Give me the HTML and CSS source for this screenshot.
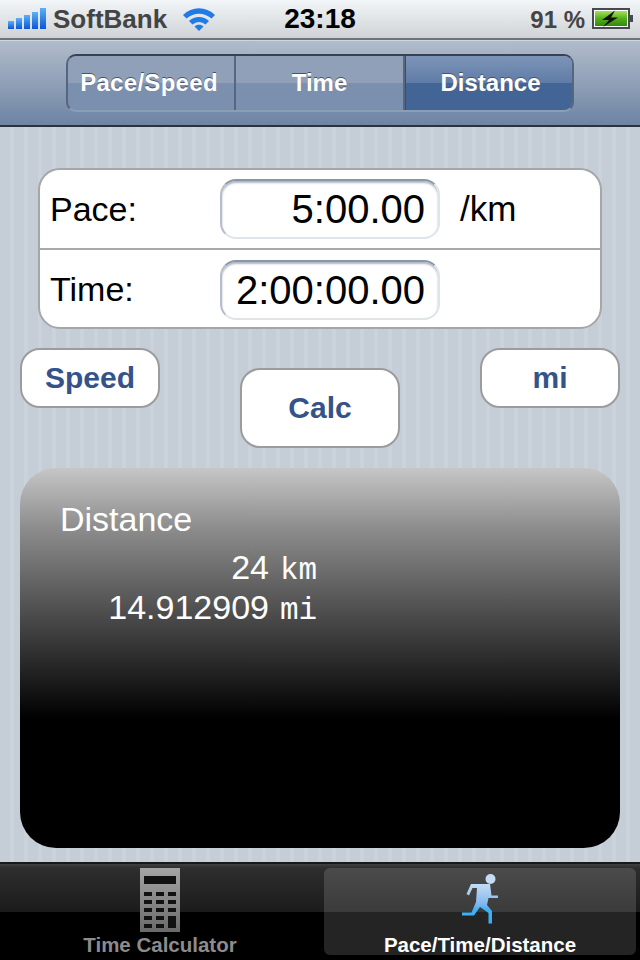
FILE: index.html
```html
<!DOCTYPE html>
<html lang="en">
<head>
    <meta charset="UTF-8">
    <title>Pace/Time/Distance</title>
    <link rel="stylesheet" href="styles.css">
</head>
<body>
    <div class="status-bar">
        <div class="status-left">
            <svg class="signal" width="40" height="22" viewBox="0 0 40 22">
                <defs>
                    <linearGradient id="sig" x1="0" y1="0" x2="0" y2="1">
                        <stop offset="0" stop-color="#5db0f5"/>
                        <stop offset="1" stop-color="#0a56d8"/>
                    </linearGradient>
                </defs>
                <rect x="0" y="13" width="6" height="8" fill="url(#sig)"/>
                <rect x="8" y="10" width="6" height="11" fill="url(#sig)"/>
                <rect x="16" y="7" width="6" height="14" fill="url(#sig)"/>
                <rect x="24" y="4" width="6" height="17" fill="url(#sig)"/>
                <rect x="32" y="0" width="6" height="21" fill="url(#sig)"/>
            </svg>
            <span class="carrier">SoftBank</span>
            <svg class="wifi" width="34" height="26" viewBox="0 0 34 26">
                <path d="M1 9 C10 0 24 0 33 9 L29.5 12.5 C22 6 12 6 4.500 12.500 Z" fill="#1f7be8"/>
                <path d="M7 15 C12.500 9.500 21.500 9.500 27 15 L23.500 18.500 C19.500 15 14.500 15 10.500 18.500 Z" fill="#1f7be8"/>
                <path d="M12.500 20.500 C15 18 19 18 21.500 20.500 L17 25 Z" fill="#1f7be8"/>
            </svg>
        </div>
        <div class="clock">23:18</div>
        <div class="status-right">
            <span class="battery-text">91 %</span>
            <svg class="battery" width="42" height="22" viewBox="0 0 42 22">
                <defs>
                    <linearGradient id="bat" x1="0" y1="0" x2="0" y2="1">
                        <stop offset="0" stop-color="#a6e05a"/>
                        <stop offset="0.5" stop-color="#54b01a"/>
                        <stop offset="1" stop-color="#2f8a0c"/>
                    </linearGradient>
                </defs>
                <rect x="1" y="1" width="36" height="19" fill="#fff" stroke="#444a50" stroke-width="2"/>
                <rect x="3" y="3" width="32" height="15" fill="url(#bat)"/>
                <rect x="37" y="7" width="4" height="7" fill="#444a50"/>
                <path d="M23 2.500 L10 12 L17 12 L11 19 L26 9.500 L19 9.500 Z" fill="#111"/>
            </svg>
        </div>
    </div>

    <header class="nav-bar">
        <div class="segments">
            <div class="segment">Pace/Speed</div>
            <div class="segment">Time</div>
            <div class="segment active">Distance</div>
        </div>
    </header>

    <main class="main-content">
        <div class="form-card">
            <div class="form-row">
                <label class="form-label">Pace:</label>
                <div class="text-field">5:00.00</div>
                <span class="unit">/km</span>
            </div>
            <div class="form-row">
                <label class="form-label">Time:</label>
                <div class="text-field">2:00:00.00</div>
            </div>
        </div>

        <div class="button-row">
            <button class="round-button small">Speed</button>
            <button class="round-button calc">Calc</button>
            <button class="round-button small">mi</button>
        </div>

        <section class="result-panel">
            <h2 class="result-title">Distance</h2>
            <div class="result-line"><span class="result-value">24</span><span class="result-unit">km</span></div>
            <div class="result-line"><span class="result-value">14.912909</span><span class="result-unit">mi</span></div>
        </section>
    </main>

    <nav class="tab-bar">
        <div class="tab">
            <svg class="tab-icon" width="40" height="64" viewBox="0 0 40 64">
                <defs>
                    <linearGradient id="calc" x1="0" y1="0" x2="0" y2="1">
                        <stop offset="0" stop-color="#a4a4a4"/>
                        <stop offset="1" stop-color="#6a6a6a"/>
                    </linearGradient>
                </defs>
                <rect width="40" height="64" fill="url(#calc)"/>
                <g fill="#111">
                    <rect x="4" y="8" width="32" height="8"/>
                    <rect x="4" y="24" width="8" height="4"/><rect x="16" y="24" width="8" height="4"/><rect x="28" y="24" width="8" height="4"/>
                    <rect x="4" y="32" width="8" height="4"/><rect x="16" y="32" width="8" height="4"/><rect x="28" y="32" width="8" height="4"/>
                    <rect x="4" y="40" width="8" height="4"/><rect x="16" y="40" width="8" height="4"/><rect x="28" y="40" width="8" height="4"/>
                    <rect x="4" y="48" width="8" height="4"/><rect x="16" y="48" width="8" height="4"/>
                    <rect x="4" y="56" width="8" height="4"/><rect x="16" y="56" width="8" height="4"/>
                    <rect x="28" y="48" width="8" height="12"/>
                </g>
            </svg>
            <span class="tab-label">Time Calculator</span>
        </div>
        <div class="tab active">
            <svg class="tab-icon" width="40" height="52" viewBox="0 0 40 52">
                <defs>
                    <linearGradient id="run" x1="0" y1="0" x2="0" y2="1">
                        <stop offset="0" stop-color="#c4dcf4"/>
                        <stop offset="0.5" stop-color="#84b8ec"/>
                        <stop offset="0.65" stop-color="#3fb0f8"/>
                        <stop offset="1" stop-color="#35aefc"/>
                    </linearGradient>
                </defs>
                <circle cx="30.500" cy="5" r="5" fill="#c4dcf4"/>
                <path d="M6.500 20 L11 10 L30 10 L31.500 21.500 L38 21.500 L38 24 L28.500 24 L27 31 L32 37 L32 49.500 L28.500 49.500 L28.500 39 L20 33 L14 41.500 L2 41.500 L2 38.500 L11.500 38.500 L16 28 L17 14 L12.500 14 L9 21.500 Z" fill="url(#run)"/>
            </svg>
            <span class="tab-label">Pace/Time/Distance</span>
        </div>
    </nav>
</body>
</html>
```

FILE: styles.css
```css
* {
    margin: 0;
    padding: 0;
    box-sizing: border-box;
}

body {
    width: 640px;
    height: 960px;
    overflow: hidden;
    font-family: 'Liberation Sans', sans-serif;
    display: flex;
    flex-direction: column;
    background: #c5cdd7;
}

.status-bar {
    flex: 0 0 40px;
    display: flex;
    justify-content: space-between;
    align-items: center;
    padding: 0 6px 0 8px;
    position: relative;
    background: linear-gradient(#f2f6f8, #cfd3d5);
    border-bottom: 2px solid #6f7377;
    color: #444;
    font-size: 26px;
    font-weight: 700;
}

.status-left,
.status-right {
    display: flex;
    align-items: center;
}

.status-left {
    gap: 5px;
}

.status-right {
    gap: 7px;
}

.carrier,
.battery-text {
    padding-top: 1px;
}

.battery-text {
    font-size: 24px;
}

.wifi {
    margin-left: 10px;
}

.clock {
    position: absolute;
    left: 0;
    right: 0;
    top: 3px;
    text-align: center;
    color: #000;
    font-size: 28px;
}

.nav-bar {
    flex: 0 0 87px;
    display: flex;
    justify-content: center;
    align-items: center;
    background: linear-gradient(#b1bccb, #6e84a3);
    border-top: 1px solid #ced5dd;
    border-bottom: 2px solid #2d3138;
}

.segments {
    width: 508px;
    height: 58px;
    display: flex;
    border: 2px solid #56667e;
    border-top-color: #3a4250;
    border-bottom-color: #8d9db3;
    border-radius: 10px;
    overflow: hidden;
    background: linear-gradient(#90a0b8 50%, #7b8fae 50%);
}

.segment {
    flex: 1;
    display: flex;
    align-items: center;
    justify-content: center;
    color: #fff;
    font-size: 24px;
    font-weight: 700;
    text-shadow: 0 -1px 0 #44546c;
    border-right: 2px solid #56677f;
}

.segment:first-child {
    flex: 0 0 168px;
    padding-right: 4px;
    letter-spacing: 0.3px;
}

.segment.active {
    flex: 0 0 167px;
    padding-left: 3px;
    border-right: none;
    border-left: 1px solid #2e4f80;
    background: linear-gradient(#7d94b8, #5f7ca6 50%, #426596 50%, #426596);
}

.main-content {
    flex: 1;
    padding: 41px 20px 14px;
    display: flex;
    flex-direction: column;
    background: repeating-linear-gradient(90deg, #c5cdd7 0, #c5cdd7 10px, #cad2dc 10px, #cad2dc 14px);
}

.form-card {
    width: 564px;
    margin: 0 auto 19px 18px;
    background: #fff;
    border: 2px solid #a6a6a6;
    border-radius: 22px;
}

.form-row {
    height: 78px;
    display: flex;
    align-items: center;
    padding-left: 10px;
}

.form-row + .form-row {
    height: 79px;
    padding-top: 2px;
    border-top: 2px solid #a9a9a9;
}

.form-label {
    width: 170px;
    font-size: 34px;
    color: #000;
}

.text-field {
    width: 220px;
    height: 60px;
    line-height: 57px;
    text-align: right;
    padding-right: 13px;
    font-size: 40px;
    color: #000;
    background: #fff;
    border: 2px solid #dfe4e9;
    border-top: 2px solid #8a96a8;
    border-left-color: #b4bdca;
    border-radius: 16px;
    box-shadow: inset 0 2px 2px rgba(120, 134, 155, 0.6);
}

.unit {
    margin-left: 20px;
    font-size: 35px;
}

.button-row {
    flex: 0 0 120px;
    display: flex;
    justify-content: space-between;
    align-items: flex-start;
}

.round-button {
    background: #fff;
    border: 2px solid #9c9c9c;
    border-radius: 20px;
    color: #34538a;
    font-family: 'Liberation Sans', sans-serif;
    font-size: 30px;
    font-weight: 700;
}

.round-button.small {
    width: 140px;
    height: 60px;
}

.round-button.calc {
    width: 160px;
    height: 80px;
    margin-top: 20px;
}

.result-panel {
    flex: 0 0 380px;
    width: 600px;
    padding: 30px 40px;
    border-radius: 36px;
    color: #fff;
    background: linear-gradient(#c6c6c6 0, #8c8c8c 16%, #3a3a3a 45%, #000 66%);
}

.result-title {
    font-size: 34px;
    font-weight: 400;
    line-height: 42px;
    margin-bottom: 7px;
}

.result-line {
    width: 270px;
    height: 40px;
    display: flex;
    justify-content: flex-end;
    align-items: baseline;
    font-size: 34px;
    line-height: 40px;
}

.result-unit {
    width: 50px;
    margin-left: 11px;
    font-family: 'Liberation Mono', monospace;
    font-size: 31px;
}

.tab-bar {
    flex: 0 0 98px;
    display: flex;
    gap: 8px;
    padding: 4px 4px 5px;
    border-top: 2px solid #17181a;
    background: linear-gradient(#3f4042 0, #2e2e2e 4px, #1b1b1b 48px, #000 48px);
}

.tab {
    flex: 1;
    display: flex;
    flex-direction: column;
    align-items: center;
    justify-content: flex-end;
    position: relative;
    color: #8c8c8c;
    font-size: 20.5px;
    font-weight: 700;
    border-radius: 6px;
}

.tab.active {
    color: #fff;
    background: rgba(255, 255, 255, 0.14);
}

.tab-icon {
    position: absolute;
    top: 0;
    left: 50%;
    transform: translateX(-50%);
}

.tab.active .tab-icon {
    top: 6px;
}

.tab-label {
    line-height: 20px;
}
```
